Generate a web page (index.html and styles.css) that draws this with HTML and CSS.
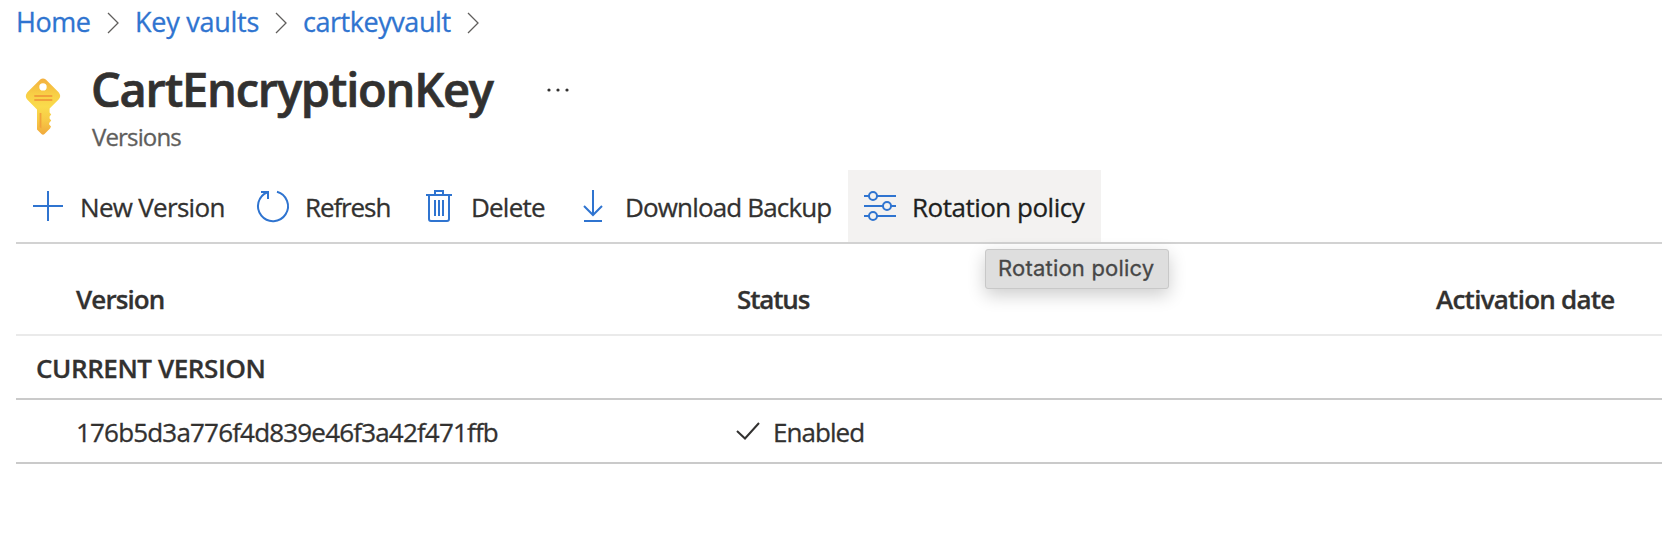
FILE: index.html
```html
<!DOCTYPE html>
<html lang="en">
<head>
<meta charset="utf-8">
<title>CartEncryptionKey</title>
<link rel="stylesheet" href="styles.css">
</head>
<body>
<nav class="breadcrumb">
  <a class="crumb crumb-home">Home</a>
  <svg class="chevron" viewBox="0 0 12 22"><path d="M1 1 L11 11 L1 21"/></svg>
  <a class="crumb crumb-vaults">Key vaults</a>
  <svg class="chevron" viewBox="0 0 12 22"><path d="M1 1 L11 11 L1 21"/></svg>
  <a class="crumb crumb-vault">cartkeyvault</a>
  <svg class="chevron" viewBox="0 0 12 22"><path d="M1 1 L11 11 L1 21"/></svg>
</nav>
<header class="header">
  <svg class="key" viewBox="0 0 36 57">
    <defs><linearGradient id="gold" x1="0" y1="0" x2="0" y2="1"><stop offset="0" stop-color="#f3b040"/><stop offset=".28" stop-color="#f8cf45"/><stop offset=".5" stop-color="#fadb4c"/><stop offset=".75" stop-color="#f7c945"/><stop offset="1" stop-color="#f1a93c"/></linearGradient></defs>
    <path fill="url(#gold)" fill-rule="evenodd" d="M15.2 1.6 Q18 -.6 20.8 1.6 L33.6 14.2 Q36.8 18 33.6 21.6 L24.6 30.6 V34.6 L26.2 36.4 L24.6 38.6 V40.6 L26.2 42.6 L24.2 45 V46.6 L26 48.4 L25 50.6 L19.5 56 Q18 57.4 16.5 56 L12 51.4 V31.5 L2.4 21.8 Q-.8 18 2.4 14.2 Z M18 5.2 A3.7 3.7 0 1 0 18 12.6 A3.7 3.7 0 1 0 18 5.2 Z"/>
    <path fill="#f1a03a" d="M9.3 17h18v2h-18z M9.3 21h18v2h-18z M14.6 35h1.8v15.500l-1.800-1.600z"/>
  </svg>
  <div class="heading">
    <div class="title-row"><h1 class="title">CartEncryptionKey</h1>
      <svg class="more" viewBox="0 0 24 6"><circle cx="3" cy="3" r="1.600"/><circle cx="12" cy="3" r="1.600"/><circle cx="21" cy="3" r="1.600"/></svg></div>
    <p class="subtitle">Versions</p>
  </div>
</header>
<div class="toolbar">
  <button class="command command-new"><svg class="icon" viewBox="0 0 32 32"><path d="M16 1v30M1 16h30"/></svg><span class="label">New Version</span></button>
  <button class="command command-refresh"><svg class="icon" viewBox="0 0 32 32"><path d="M21 1.700A15 15 0 1 1 11.500 2.200M5 2h7v7"/></svg><span class="label">Refresh</span></button>
  <button class="command command-delete"><svg class="icon" viewBox="0 0 32 32"><path d="M4 5h26M13 5V1h8v4M7 5v24q0 2 2 2h16q2 0 2-2V5M13 10v16M17 10v16M21 10v16"/></svg><span class="label">Delete</span></button>
  <button class="command command-download"><svg class="icon" viewBox="0 0 32 32"><path d="M17 0v25M8 16l9 9 9-9M8 31h18"/></svg><span class="label">Download Backup</span></button>
  <button class="command command-rotation"><svg class="icon" viewBox="0 0 32 32"><path d="M0 6h5M13 6h19M0 16h19M27 16h5M0 26h5M13 26h19"/><circle cx="9" cy="6" r="4"/><circle cx="23" cy="16" r="4"/><circle cx="9" cy="26" r="4"/></svg><span class="label">Rotation policy</span>
    <span class="tooltip">Rotation policy</span></button>
</div>
<div class="grid">
  <div class="row row-head"><span class="c-version">Version</span><span class="c-status">Status</span><span class="c-date">Activation date</span></div>
  <div class="row row-group"><span>CURRENT VERSION</span></div>
  <div class="row"><span class="c-id">176b5d3a776f4d839e46f3a42f471ffb</span><div class="state"><svg class="check" viewBox="0 0 24 18"><path d="M1 9l8 7.500L23 1"/></svg><span class="c-enabled">Enabled</span></div></div>
</div>
</body>
</html>
```
FILE: styles.css
```css
* { box-sizing: border-box; }
body { margin: 0; height: 536px; overflow: hidden; background: #fff; color: #323130; font-family: "Open Sans", "Noto Sans", sans-serif; font-size: 26px; -webkit-text-stroke: .3px currentColor; }
span { white-space: nowrap; }
svg { flex: none; overflow: visible; }
.breadcrumb { display: flex; align-items: center; height: 46px; padding-left: 16px; line-height: 44px; }
.crumb { padding-bottom: 2px; color: #2f74d0; font-size: 27px; }
.crumb-home { width: 91px; letter-spacing: -.5px; }
.crumb-vaults { width: 140px; letter-spacing: -.25px; }
.crumb-vault { width: 164px; letter-spacing: -.45px; }
.chevron { width: 12px; height: 22px; margin-right: 16px; fill: none; stroke: #605e5c; stroke-width: 1.3; }
.header { display: flex; height: 124px; padding: 32px 0 0 24.500px; }
.key { width: 36px; height: 57px; }
.heading { margin: -21px 0 0 30.500px; }
.title-row { display: flex; align-items: center; height: 64px; }
.title { width: 455px; margin: 0; font-size: 47px; font-weight: 600; line-height: 64px; letter-spacing: -1.22px; -webkit-text-stroke-width: .7px; }
.more { width: 24px; height: 6px; margin-top: 2px; fill: #323130; }
.subtitle { margin: 0; padding-left: 1px; color: #605e5c; font-size: 24px; line-height: 32px; letter-spacing: -.85px; }
.toolbar { display: flex; height: 74px; margin-left: 16px; border-bottom: 2px solid #d2d2d2; }
.command { position: relative; display: flex; align-items: center; gap: 16px; height: 72px; padding: 0 16px; border: 0; background: none; color: #323130; font: inherit; }
.label { padding-top: 2px; }
.command-new { width: 224px; letter-spacing: -.7px; }
.command-refresh { width: 166px; letter-spacing: -1.1px; }
.command-delete { width: 154px; letter-spacing: -.8px; }
.command-download { width: 288px; letter-spacing: -.85px; }
.command-rotation { width: 253px; background: #f3f2f1; color: #201f1e; letter-spacing: -.5px; }
.command-refresh .label, .command-delete .label, .command-download .label { padding-left: 1px; }
.icon { width: 32px; height: 32px; fill: none; stroke: #2f74d0; stroke-width: 2; }
.tooltip { position: absolute; top: 79px; left: 137px; width: 184px; height: 40px; padding-left: 12px; border: 1px solid #c8c8c8; border-radius: 3px; background: #dedede; box-shadow: 0 6px 18px rgba(0,0,0,.2); color: #474747; font: 22px/36px Inter, sans-serif; letter-spacing: .2px; text-align: left; }
.grid { margin-left: 16px; }
.row { display: flex; align-items: center; height: 64px; padding: 2px 0 0 60px; border-bottom: 2px solid #cacaca; letter-spacing: -.82px; }
.row-head { height: 92px; padding-top: 20px; border-color: #eaeaea; font-weight: 600; }
.row-group { padding-left: 20px; font-weight: 600; letter-spacing: -.42px; }
.c-version { width: 661px; letter-spacing: -.9px; }
.c-status { width: 699px; letter-spacing: -1.15px; }
.c-date { letter-spacing: -.75px; }
.c-id { width: 660px; }
.c-enabled { letter-spacing: -.95px; }
.state { display: flex; align-items: center; gap: 13px; }
.check { width: 24px; height: 18px; margin-top: -2px; fill: none; stroke: #323130; stroke-width: 2; }
```
